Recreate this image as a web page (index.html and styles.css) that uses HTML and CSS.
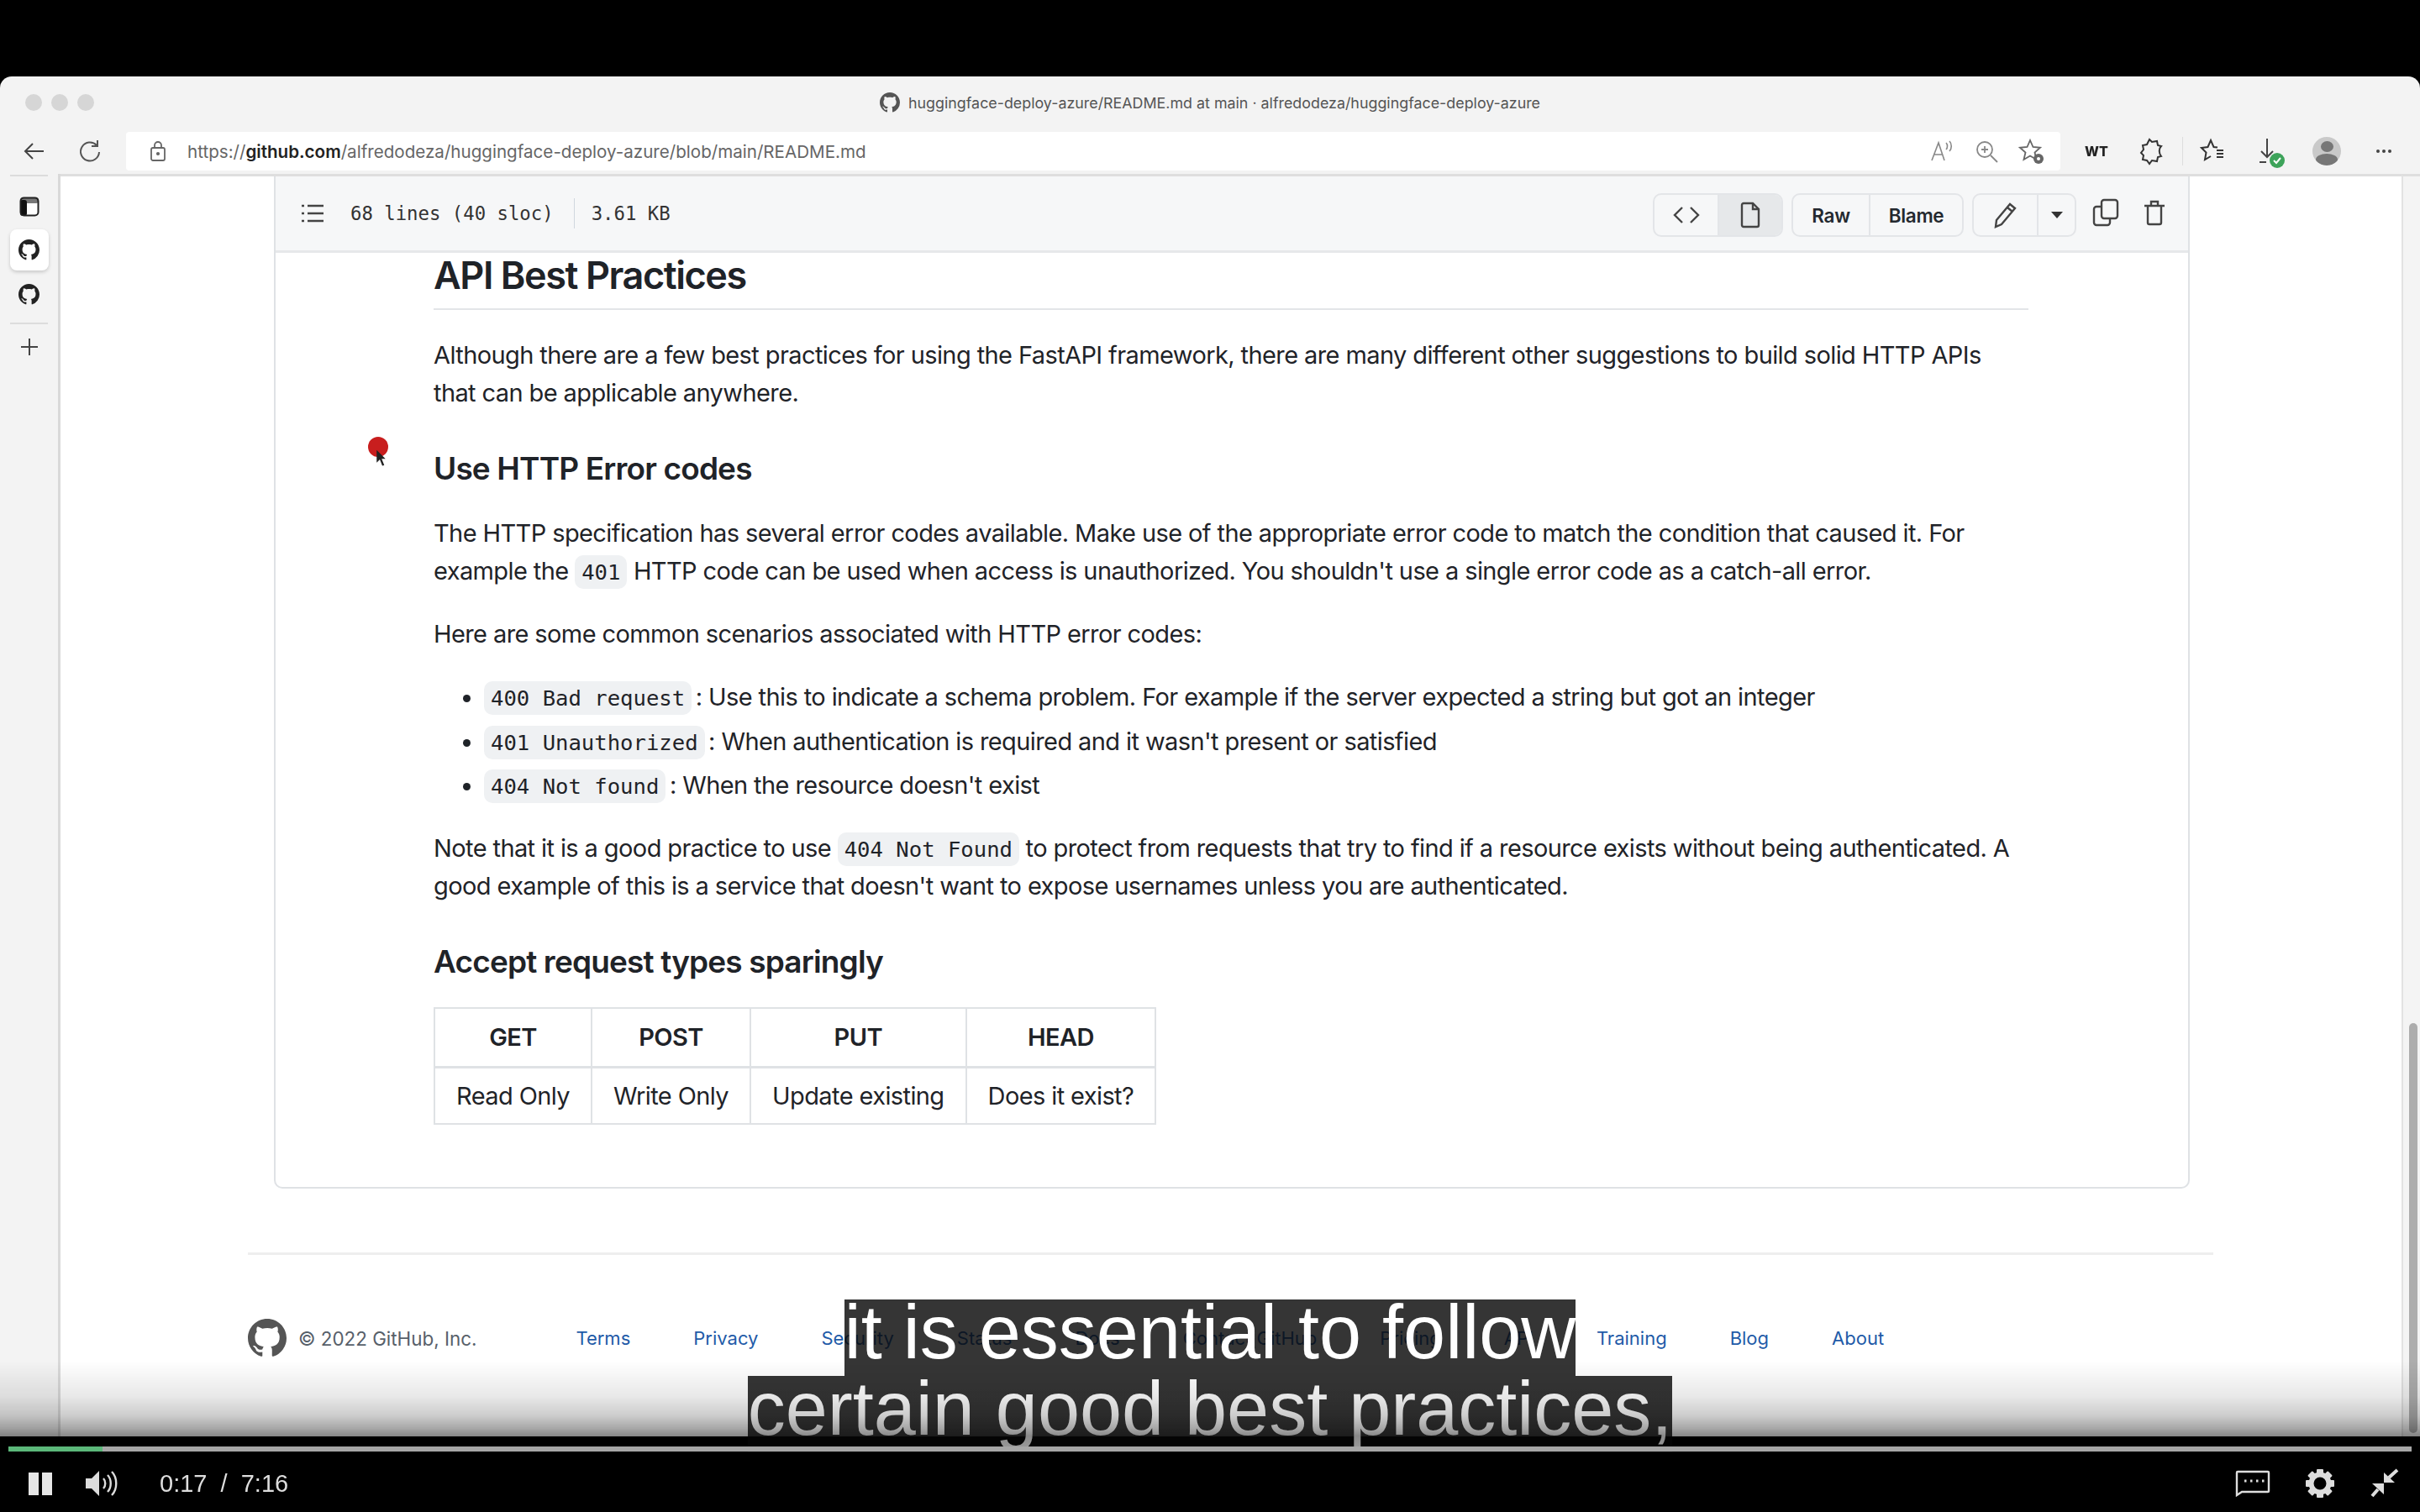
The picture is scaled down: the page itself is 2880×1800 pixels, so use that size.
FILE: index.html
```html
<!DOCTYPE html>
<html lang="en">
<head>
    <meta charset="UTF-8">
    <title>huggingface-deploy-azure/README.md at main</title>
    <link rel="stylesheet" href="styles.css">
</head>
<body>
    <div class="letterbox"></div>
    <div class="window">
        <div class="titlebar">
            <div class="traffic"><span></span><span></span><span></span></div>
            <div class="tab-title">
                <svg class="gh-small" viewBox="0 0 16 16"><use href="#octo"/></svg>
                huggingface-deploy-azure/README.md at main · alfredodeza/huggingface-deploy-azure
            </div>
        </div>
        <div class="toolbar">
            <div class="nav-btn">
                <svg width="30" height="30" viewBox="0 0 30 30" fill="none" stroke="#444" stroke-width="2"><path d="M26 15H5M13 6l-9 9 9 9"/></svg>
            </div>
            <div class="nav-btn">
                <svg width="30" height="30" viewBox="0 0 30 30" fill="none" stroke="#555" stroke-width="2"><path d="M23 8a11 11 0 1 0 3 8M24 2v7h-7"/></svg>
            </div>
            <div class="address">
                <svg width="22" height="26" viewBox="0 0 22 26" fill="none" stroke="#666" stroke-width="1.8"><rect x="3" y="9" width="16" height="15" rx="2"/><path d="M7 9V6a4 4 0 0 1 8 0v3"/><circle cx="11" cy="16" r="1.2" fill="#666"/></svg>
                <div class="url">https://<b>github.com</b>/alfredodeza/huggingface-deploy-azure/blob/main/README.md</div>
                <div class="addr-icons">
                    <svg width="30" height="30" viewBox="0 0 30 30" fill="none" stroke="#888" stroke-width="1.6"><path d="M3 26 11 5l7 21M6 19h10M20 5c2 2 2 6 0 8M24 3c3 3 3 9 0 12"/></svg>
                    <svg width="30" height="30" viewBox="0 0 30 30" fill="none" stroke="#888" stroke-width="1.8"><circle cx="13" cy="13" r="9"/><path d="M20 20l8 8M13 9v8M9 13h8"/></svg>
                    <svg width="32" height="32" viewBox="0 0 32 32" fill="none" stroke="#666" stroke-width="1.8"><path d="M14 3l3.5 8 8.5.8-6.5 5.7 2 8.5-7.5-4.5L6.5 26l2-8.5L2 11.8l8.5-.8z"/><circle cx="24" cy="25" r="6" fill="#666" stroke="none"/><circle cx="24" cy="25" r="2" fill="#fff" stroke="none"/></svg>
                </div>
            </div>
            <div class="tool-icons">
                <span class="wt">WT</span>
                <svg class="icon-ext" width="30" height="34" viewBox="0 0 30 34" fill="none" stroke="#333" stroke-width="2"><path d="M12 3l3 3 6-1 1 5 4 1c-3 3-3 8 0 12l-4 1-1 5-6-1-3 4-3-4-5-1 1-5-3-3 3-4-1-5 5-1z"/></svg>
                <i class="tool-sep"></i>
                <svg width="32" height="32" viewBox="0 0 32 32" fill="none" stroke="#333" stroke-width="2"><path d="M21 11.5 16.5 11 13 3 9.5 11 2 12l5.5 5.500L6 26l7-4M20 15h8M20 19h8M20 23h8"/></svg>
                <div class="download">
                    <svg width="30" height="36" viewBox="0 0 30 36" fill="none" stroke="#444" stroke-width="2"><path d="M15 3v22M8 18l7 7 7-7M6 31h8"/></svg>
                    <svg class="ok-badge" width="18" height="18" viewBox="0 0 18 18" fill="none"><circle cx="9" cy="9" r="9" fill="#3da35a"/><path d="M5 9l3 3 5-6" stroke="#fff" stroke-width="2"/></svg>
                </div>
                <div class="avatar"><i class="avatar-head"></i><i class="avatar-body"></i></div>
                <div class="more"><i></i><i></i><i></i></div>
            </div>
        </div>
        <div class="browser">
            <div class="sidebar">
                <i class="side-rule"></i>
                <svg class="side-icon" width="24" height="24" viewBox="0 0 24 24"><rect x="1" y="1" width="22" height="22" rx="4" fill="#fff"/><rect x="1" y="1" width="22" height="7" rx="3" fill="#777"/><rect x="1" y="4" width="8" height="19" rx="3" fill="#111"/><rect x="1.5" y="1.5" width="21" height="21" rx="4" fill="none" stroke="#222" stroke-width="2"/></svg>
                <div class="side-tile"><svg class="gh-side" viewBox="0 0 16 16"><use href="#octo"/></svg></div>
                <svg class="gh-side gh-side2" viewBox="0 0 16 16"><use href="#octo"/></svg>
                <i class="side-rule side-rule2"></i>
                <svg class="side-plus" width="24" height="24" viewBox="0 0 24 24" fill="none" stroke="#444" stroke-width="2"><path d="M12 2v20M2 12h20"/></svg>
            </div>
            <div class="page">
                <div class="file-box">
                    <div class="file-head">
                        <svg class="list-icon" width="28" height="24" viewBox="0 0 28 24" fill="none" stroke="#444" stroke-width="2.6"><path d="M8 3h19M8 12h19M8 21h19M1 3h3M1 12h3M1 21h3"/></svg>
                        <span class="file-info">68 lines (40 sloc)</span>
                        <i class="info-sep"></i>
                        <span class="file-info">3.61 KB</span>
                        <div class="file-actions">
                            <div class="btn-group">
                                <div class="btn btn-code">
                                    <svg width="32" height="24" viewBox="0 0 32 24" fill="none" stroke="#444" stroke-width="2.4"><path d="M11 3l-9 9 9 9M21 3l9 9-9 9"/></svg>
                                </div>
                                <div class="btn btn-doc">
                                    <svg width="26" height="32" viewBox="0 0 26 32" fill="none" stroke="#444" stroke-width="2.4"><path d="M3 4a2 2 0 0 1 2-2h11l7 7v19a2 2 0 0 1-2 2H5a2 2 0 0 1-2-2zM16 2v7h7"/></svg>
                                </div>
                            </div>
                            <div class="btn-group">
                                <div class="btn btn-raw">Raw</div>
                                <div class="btn btn-blame">Blame</div>
                            </div>
                            <div class="btn-group">
                                <div class="btn btn-pen">
                                    <svg width="30" height="32" viewBox="0 0 30 32" fill="none" stroke="#444" stroke-width="2.4"><path d="M4 22 20 3l6 5L10 27l-7 3zM17 7l6 5"/></svg>
                                </div>
                                <div class="btn btn-caret"><i class="caret"></i></div>
                            </div>
                            <svg class="icon-copy" width="32" height="34" viewBox="0 0 32 34" fill="none" stroke="#444" stroke-width="2.4"><rect x="11" y="2" width="19" height="22" rx="3"/><path d="M11 10H5a3 3 0 0 0-3 3v16a3 3 0 0 0 3 3h13a3 3 0 0 0 3-3v-5"/></svg>
                            <svg class="icon-trash" width="26" height="32" viewBox="0 0 26 32" fill="none" stroke="#444" stroke-width="2.4"><path d="M1 8h24M9 8V3h8v5M5 8v20a2 2 0 0 0 2 2h12a2 2 0 0 0 2-2V8"/></svg>
                        </div>
                    </div>
                    <article class="readme">
                        <h2>API Best Practices</h2>
                        <p>Although there are a few best practices for using the FastAPI framework, there are many different other suggestions to build solid HTTP APIs that can be applicable anywhere.</p>
                        <h3>Use HTTP Error codes</h3>
                        <p>The HTTP specification has several error codes available. Make use of the appropriate error code to match the condition that caused it. For example the <code>401</code> HTTP code can be used when access is unauthorized. You shouldn't use a single error code as a catch-all error.</p>
                        <p>Here are some common scenarios associated with HTTP error codes:</p>
                        <ul>
                            <li><code>400 Bad request</code> : Use this to indicate a schema problem. For example if the server expected a string but got an integer</li>
                            <li><code>401 Unauthorized</code> : When authentication is required and it wasn't present or satisfied</li>
                            <li><code>404 Not found</code> : When the resource doesn't exist</li>
                        </ul>
                        <p>Note that it is a good practice to use <code>404 Not Found</code> to protect from requests that try to find if a resource exists without being authenticated. A good example of this is a service that doesn't want to expose usernames unless you are authenticated.</p>
                        <h3>Accept request types sparingly</h3>
                        <table>
                            <thead>
                                <tr><th>GET</th><th>POST</th><th>PUT</th><th>HEAD</th></tr>
                            </thead>
                            <tbody>
                                <tr><td>Read Only</td><td>Write Only</td><td>Update existing</td><td>Does it exist?</td></tr>
                            </tbody>
                        </table>
                    </article>
                </div>
                <footer class="footer">
                    <svg class="gh-foot" viewBox="0 0 16 16"><use href="#octo"/></svg>
                    <span class="copy">© 2022 GitHub, Inc.</span>
                    <nav class="foot-links">
                        <a>Terms</a><a>Privacy</a><a>Security</a><a>Status</a><a>Docs</a><a>Contact GitHub</a><a>Pricing</a><a>API</a><a>Training</a><a>Blog</a><a>About</a>
                    </nav>
                </footer>
            </div>
            <div class="scroll-strip"><i class="scroll-thumb"></i></div>
        </div>
        <div class="mouse-dot"></div>
        <svg class="mouse-arrow" width="13" height="21" viewBox="0 0 16 28"><path d="M1 1v20l5-5 4 10 3-1-4-10h6z" fill="#222"/></svg>
    </div>

    <div class="captions">
        <span class="cap-line">it is essential to follow</span>
        <span class="cap-line">certain good best practices,</span>
    </div>
    <div class="shade"></div>

    <div class="player">
        <div class="progress"><div class="progress-done"></div></div>
        <div class="controls">
            <div class="pause"><i></i><i></i></div>
            <svg class="speaker" width="40" height="34" viewBox="0 0 40 34" fill="none" stroke="#ddd" stroke-width="2.4"><path d="M1 11h7l9-9v30l-9-9H1z" fill="#ddd" stroke="none"/><path d="M22 11c3 3 3 9 0 12M27 7c5 5 5 15 0 20M32 3c7 7 7 21 0 28"/></svg>
            <span class="time">0:17&nbsp; / &nbsp;7:16</span>
            <div class="right-controls">
                <svg width="42" height="32" viewBox="0 0 42 32" fill="none" stroke="#ddd" stroke-width="2.4"><path d="M2 3a1 1 0 0 1 1-1h36a1 1 0 0 1 1 1v22a1 1 0 0 1-1 1H8l-6 4z"/><path d="M11 13h2.5M18 13h2.5M25 13h2.5M32 13h2.5" stroke-width="3"/></svg>
                <svg width="38" height="38" viewBox="0 0 38 38" fill="#ddd">
                    <circle cx="19" cy="19" r="10.5" fill="none" stroke="#ddd" stroke-width="6"/>
                    <rect x="15" y="2" width="8" height="34" rx="1"/>
                    <rect x="15" y="2" width="8" height="34" rx="1" transform="rotate(45 19 19)"/>
                    <rect x="15" y="2" width="8" height="34" rx="1" transform="rotate(90 19 19)"/>
                    <rect x="15" y="2" width="8" height="34" rx="1" transform="rotate(135 19 19)"/>
                    <circle cx="19" cy="19" r="7.5" fill="#000"/>
                </svg>
                <svg width="36" height="36" viewBox="0 0 36 36" fill="#ddd"><path d="M17 5l13 12H17zM3 18h14v13z"/><path d="M23 11l10-9M10 25l-7 8" stroke="#ddd" stroke-width="4" fill="none"/></svg>
            </div>
        </div>
    </div>

    <svg class="defs" width="0" height="0">
        <symbol id="octo" viewBox="0 0 16 16">
            <path fill="currentColor" d="M8 0C3.58 0 0 3.58 0 8c0 3.54 2.29 6.53 5.47 7.59.4.07.55-.17.55-.38 0-.19-.01-.82-.01-1.49-2.01.37-2.53-.49-2.69-.94-.09-.23-.48-.94-.82-1.13-.28-.15-.68-.52-.01-.53.63-.01 1.08.58 1.23.82.72 1.21 1.87.87 2.33.66.07-.52.28-.87.51-1.07-1.78-.2-3.64-.89-3.64-3.95 0-.87.31-1.59.82-2.15-.08-.2-.36-1.02.08-2.12 0 0 .67-.21 2.2.82.64-.18 1.32-.27 2-.27s1.36.09 2 .27c1.53-1.04 2.2-.82 2.2-.82.44 1.1.16 1.92.08 2.12.51.56.82 1.27.82 2.15 0 3.07-1.87 3.75-3.65 3.95.29.25.54.73.54 1.48 0 1.07-.01 1.93-.01 2.2 0 .21.15.46.55.38A8.01 8.01 0 0 0 16 8c0-4.42-3.58-8-8-8z"/>
        </symbol>
    </svg>
</body>
</html>
```

FILE: styles.css
```css
* {
    box-sizing: border-box;
}
body {
    margin: 0;
    width: 2880px;
    height: 1800px;
    overflow: hidden;
    background-color: #000;
    font-family: Inter, "Liberation Sans", sans-serif;
    color: #24292f;
    display: flex;
    flex-direction: column;
    position: relative;
}
i {
    display: block;
}
.letterbox {
    height: 91px;
    flex: none;
}
.defs {
    position: absolute;
}

/* browser window */
.window {
    height: 1619px;
    flex: none;
    background-color: #f3f3f3;
    border-radius: 14px 14px 0 0;
    overflow: hidden;
    position: relative;
    display: flex;
    flex-direction: column;
    filter: blur(0.7px);
}
.titlebar {
    height: 66px;
    flex: none;
    display: flex;
    align-items: center;
    justify-content: center;
    position: relative;
}
.traffic {
    position: absolute;
    left: 30px;
    top: 21px;
    display: flex;
    gap: 11px;
}
.traffic span {
    width: 20px;
    height: 20px;
    border-radius: 50%;
    background-color: #d6d6d6;
}
.tab-title {
    display: flex;
    align-items: center;
    gap: 10px;
    font-size: 17.85px;
    color: #555;
    margin-top: -4px;
}
.gh-small {
    width: 24px;
    height: 24px;
    color: #555;
}
.toolbar {
    height: 50px;
    flex: none;
    display: flex;
    align-items: flex-start;
}
.nav-btn {
    width: 66px;
    height: 46px;
    display: flex;
    align-items: center;
    justify-content: center;
    flex: none;
}
.nav-btn:first-child {
    width: 74px;
    padding-left: 8px;
}
.address {
    width: 2302px;
    height: 46px;
    margin-left: 10px;
    background-color: #fff;
    border-radius: 4px;
    display: flex;
    align-items: center;
    padding-left: 27px;
    flex: none;
}
.url {
    margin-left: 24px;
    font-size: 20.6px;
    color: #666;
}
.url b {
    color: #222;
    font-weight: 600;
}
.addr-icons {
    margin-left: auto;
    margin-right: 18px;
    display: flex;
    align-items: center;
    gap: 23px;
}
.tool-icons {
    flex: 1;
    height: 46px;
    display: flex;
    align-items: center;
    padding-left: 29px;
}
.wt {
    font-size: 16px;
    font-weight: 800;
    color: #222;
    width: 26px;
}
.tool-icons svg {
    flex: none;
}
.icon-ext {
    margin-left: 39px;
}
.tool-sep {
    width: 1px;
    height: 34px;
    background-color: #ddd;
    margin: 0 20px 0 21px;
}
.download {
    position: relative;
    margin-left: 33px;
    height: 36px;
}
.ok-badge {
    position: absolute;
    right: -6px;
    bottom: -2px;
}
.avatar {
    width: 34px;
    height: 34px;
    margin-left: 39px;
    border-radius: 50%;
    background-color: #c9c9c9;
    overflow: hidden;
    display: flex;
    flex-direction: column;
    align-items: center;
    flex: none;
}
.avatar-head {
    width: 15px;
    height: 15px;
    border-radius: 50%;
    background-color: #777;
    margin-top: 5px;
}
.avatar-body {
    width: 26px;
    height: 16px;
    border-radius: 50%;
    background-color: #777;
    margin-top: 2px;
}
.more {
    display: flex;
    gap: 3px;
    margin-left: 42px;
}
.more i {
    width: 4px;
    height: 4px;
    border-radius: 50%;
    background-color: #444;
}

/* left rail and page */
.browser {
    flex: 1;
    display: flex;
    min-height: 0;
}
.sidebar {
    width: 72px;
    flex: none;
    background-color: #f3f3f3;
    border-right: 3px solid #d9d9d9;
    display: flex;
    flex-direction: column;
    align-items: center;
    padding: 1px 0 0;
}
.side-rule {
    width: 45px;
    height: 2px;
    flex: none;
    background-color: #dcdcdc;
}
.side-rule2 {
    margin-top: 21px;
}
.side-icon {
    margin-top: 24px;
}
.side-tile {
    margin-top: 15px;
    width: 46px;
    height: 49px;
    background-color: #fff;
    border-radius: 8px;
    box-shadow: 0 2px 4px rgba(0, 0, 0, .18);
    display: flex;
    align-items: center;
    justify-content: center;
    flex: none;
}
.gh-side {
    width: 25px;
    height: 25px;
    color: #222;
    flex: none;
}
.gh-side2 {
    margin-top: 16px;
}
.side-plus {
    margin-top: 15px;
}
.page {
    flex: 1;
    background-color: #fff;
    border-top: 3px solid #dedede;
    padding: 0 0 0 254px;
    min-width: 0;
}
.scroll-strip {
    width: 22px;
    flex: none;
    background-color: #f4f4f4;
    border-left: 2px solid #e2e2e2;
    border-top: 3px solid #dedede;
    position: relative;
}
.scroll-thumb {
    position: absolute;
    right: 3px;
    bottom: 4px;
    width: 10px;
    height: 488px;
    background-color: #adadad;
    border-radius: 5px;
}

/* file box */
.file-box {
    width: 2280px;
    height: 1205px;
    border: 2px solid #dfe2e5;
    border-top: none;
    border-radius: 0 0 10px 10px;
}
.file-head {
    height: 91px;
    background-color: #f6f7f8;
    border-bottom: 3px solid #e6e8ea;
    display: flex;
    align-items: center;
    padding-left: 30px;
}
.list-icon {
    flex: none;
}
.file-info {
    font-family: "DejaVu Sans Mono", monospace;
    font-size: 22.3px;
    color: #333;
    white-space: nowrap;
}
.list-icon + .file-info {
    margin-left: 31px;
}
.info-sep {
    width: 1px;
    height: 36px;
    background-color: #d0d7de;
    margin: 0 20px 0 24px;
}
.file-actions {
    margin-left: auto;
    display: flex;
    align-items: center;
    gap: 10px;
    padding: 4px 27px 0 0;
}
.btn-group {
    display: flex;
    height: 52px;
    border: 2px solid #e3e5e8;
    border-radius: 10px;
    background-color: #f6f7f8;
    overflow: hidden;
}
.btn {
    display: flex;
    align-items: center;
    justify-content: center;
    font-size: 22.5px;
    font-weight: 600;
    letter-spacing: -0.3px;
    color: #24292f;
}
.btn + .btn {
    border-left: 2px solid #e3e5e8;
}
.btn-code {
    width: 75px;
}
.btn-doc {
    width: 76px;
    background-color: #e6e8ea;
}
.btn-raw {
    width: 90px;
}
.btn-blame {
    width: 111px;
}
.btn-pen {
    width: 75px;
}
.btn-caret {
    width: 45px;
}
.caret {
    width: 0;
    height: 0;
    border-left: 7px solid transparent;
    border-right: 7px solid transparent;
    border-top: 8px solid #333;
}
.icon-copy {
    margin: -6px 0 0 9px;
}
.icon-trash {
    margin: -6px 0 0 19px;
}

/* readme text */
.readme {
    padding: 0 190px 0 188px;
    font-size: 29px;
    line-height: 45px;
    letter-spacing: -0.6px;
    color: #1f2328;
}
.readme h2 {
    margin: 0 0 31px;
    padding: 0 0 13px;
    font-size: 45px;
    line-height: 53px;
    letter-spacing: -1.43px;
    font-weight: 600;
    border-bottom: 2px solid #e3e5e8;
}
.readme h3 {
    margin: 45px 0 31px;
    font-size: 37px;
    line-height: 46px;
    letter-spacing: -0.85px;
    font-weight: 600;
}
.readme p {
    margin: 0 0 30px;
}
.readme code {
    font-family: "DejaVu Sans Mono", monospace;
    font-size: 25.6px;
    line-height: 1;
    letter-spacing: 0;
    background-color: #eff1f3;
    border-radius: 10px;
    padding: 5px 8px;
}
.readme ul {
    margin: 0 0 30px;
    padding: 0 0 0 60px;
}
.readme li + li {
    margin-top: 7.5px;
}
.readme li code {
    margin-right: -3px;
}
.readme table {
    border-collapse: collapse;
}
.readme th, .readme td {
    border: 2px solid #dfe2e5;
    padding: 0 25px;
    text-align: center;
}
.readme th {
    height: 70px;
    font-weight: 600;
    border-bottom-width: 3px;
}
.readme td {
    height: 68px;
}

/* footer */
.footer {
    width: 2339px;
    margin: 76px 0 0 -31px;
    border-top: 3px solid #eeeeee;
    padding-top: 76px;
    display: flex;
    align-items: center;
    font-size: 22.4px;
}
.gh-foot {
    width: 46px;
    height: 46px;
    color: #555;
    flex: none;
}
.copy {
    margin-left: 14px;
    color: #57606a;
}
.foot-links {
    margin-left: 118px;
    display: flex;
    gap: 75px;
    font-size: 22px;
    color: #1f5ba8;
}

/* recording cursor */
.mouse-dot {
    position: absolute;
    left: 438px;
    top: 429px;
    width: 24px;
    height: 24px;
    border-radius: 50%;
    background-color: #c81e1e;
}
.mouse-arrow {
    position: absolute;
    left: 447px;
    top: 444px;
}

/* video player */
.captions {
    position: absolute;
    left: 0;
    right: 0;
    top: 1547px;
    display: flex;
    flex-direction: column;
    align-items: center;
    font-family: "Liberation Sans", Arial, sans-serif;
    font-size: 90px;
    line-height: 78px;
    color: #fff;
}
.cap-line {
    background-color: rgba(8, 8, 8, .82);
    white-space: nowrap;
    height: 91px;
}
.shade {
    position: absolute;
    left: 0;
    right: 0;
    top: 1620px;
    height: 104px;
    background: linear-gradient(rgba(0, 0, 0, 0), rgba(0, 0, 0, .09) 41%, rgba(0, 0, 0, .2) 63%, rgba(0, 0, 0, .34) 77%, rgba(0, 0, 0, .46) 86%, rgba(0, 0, 0, .4));
}
.player {
    flex: 1;
    position: relative;
    padding-top: 12px;
}
.progress {
    margin-left: 10px;
    width: 2860px;
    height: 6px;
    background-color: #a6a6a6;
}
.progress-done {
    width: 112px;
    height: 100%;
    background-color: #5cb87a;
}
.controls {
    height: 72px;
    display: flex;
    align-items: center;
    padding: 4px 24px 0 34px;
    color: #ddd;
}
.pause {
    display: flex;
    gap: 4px;
}
.pause i {
    width: 12px;
    height: 27px;
    background-color: #e6e6e6;
}
.speaker {
    margin-left: 39px;
}
.time {
    margin-left: 49px;
    font-family: "Liberation Sans", Arial, sans-serif;
    font-size: 29px;
}
.right-controls {
    margin-left: auto;
    display: flex;
    align-items: center;
    gap: 40px;
}
```
